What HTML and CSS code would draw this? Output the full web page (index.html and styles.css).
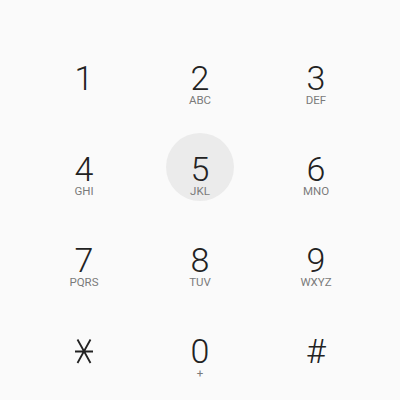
FILE: index.html
```html
<!DOCTYPE html>
<html lang="en">
<head>
  <meta charset="UTF-8">
  <title>Dialpad</title>
  <link rel="stylesheet" href="styles.css">
</head>
<body>

  <div class="pad">
    <div class="key"><span class="digit">1</span><span class="letters"></span></div>
    <div class="key"><span class="digit">2</span><span class="letters">ABC</span></div>
    <div class="key"><span class="digit">3</span><span class="letters">DEF</span></div>

    <div class="key"><span class="digit">4</span><span class="letters">GHI</span></div>
    <div class="key pressed"><span class="digit">5</span><span class="letters">JKL</span></div>
    <div class="key"><span class="digit">6</span><span class="letters">MNO</span></div>

    <div class="key"><span class="digit">7</span><span class="letters">PQRS</span></div>
    <div class="key"><span class="digit">8</span><span class="letters">TUV</span></div>
    <div class="key"><span class="digit">9</span><span class="letters">WXYZ</span></div>

    <div class="key">
      <span class="digit">
        <svg width="20" height="26" viewBox="0 0 20 26" aria-label="*">
          <path d="M1 13.5H19M3.5 1.5L16.5 25M16.5 1.5L3.5 25" stroke="#222" stroke-width="1.8" fill="none"/>
        </svg>
      </span>
      <span class="letters"></span>
    </div>
    <div class="key"><span class="digit">0</span><span class="letters">+</span></div>
    <div class="key"><span class="digit">#</span><span class="letters"></span></div>
  </div>

</body>
</html>
```

FILE: styles.css
```css
body { margin: 0; height: 400px; background: #fafafa; font-family: Roboto, "Noto Sans", sans-serif; }
.pad { display: grid; grid-template-columns: repeat(3, 116px); grid-auto-rows: 91px; justify-content: center; padding-top: 30px; }
.key { width: 68px; height: 68px; box-sizing: border-box; padding-top: 20px; border-radius: 50%; align-self: center; justify-self: center; display: flex; flex-direction: column; align-items: center; }
.key.pressed { background: #ebebeb; }
.digit { display: flex; align-items: center; justify-content: center; height: 32px; line-height: 32px; font-size: 34px; font-weight: 300; color: #222; }
.letters { height: 12px; line-height: 12px; font-size: 11.5px; color: #7a7a7a; }
```
